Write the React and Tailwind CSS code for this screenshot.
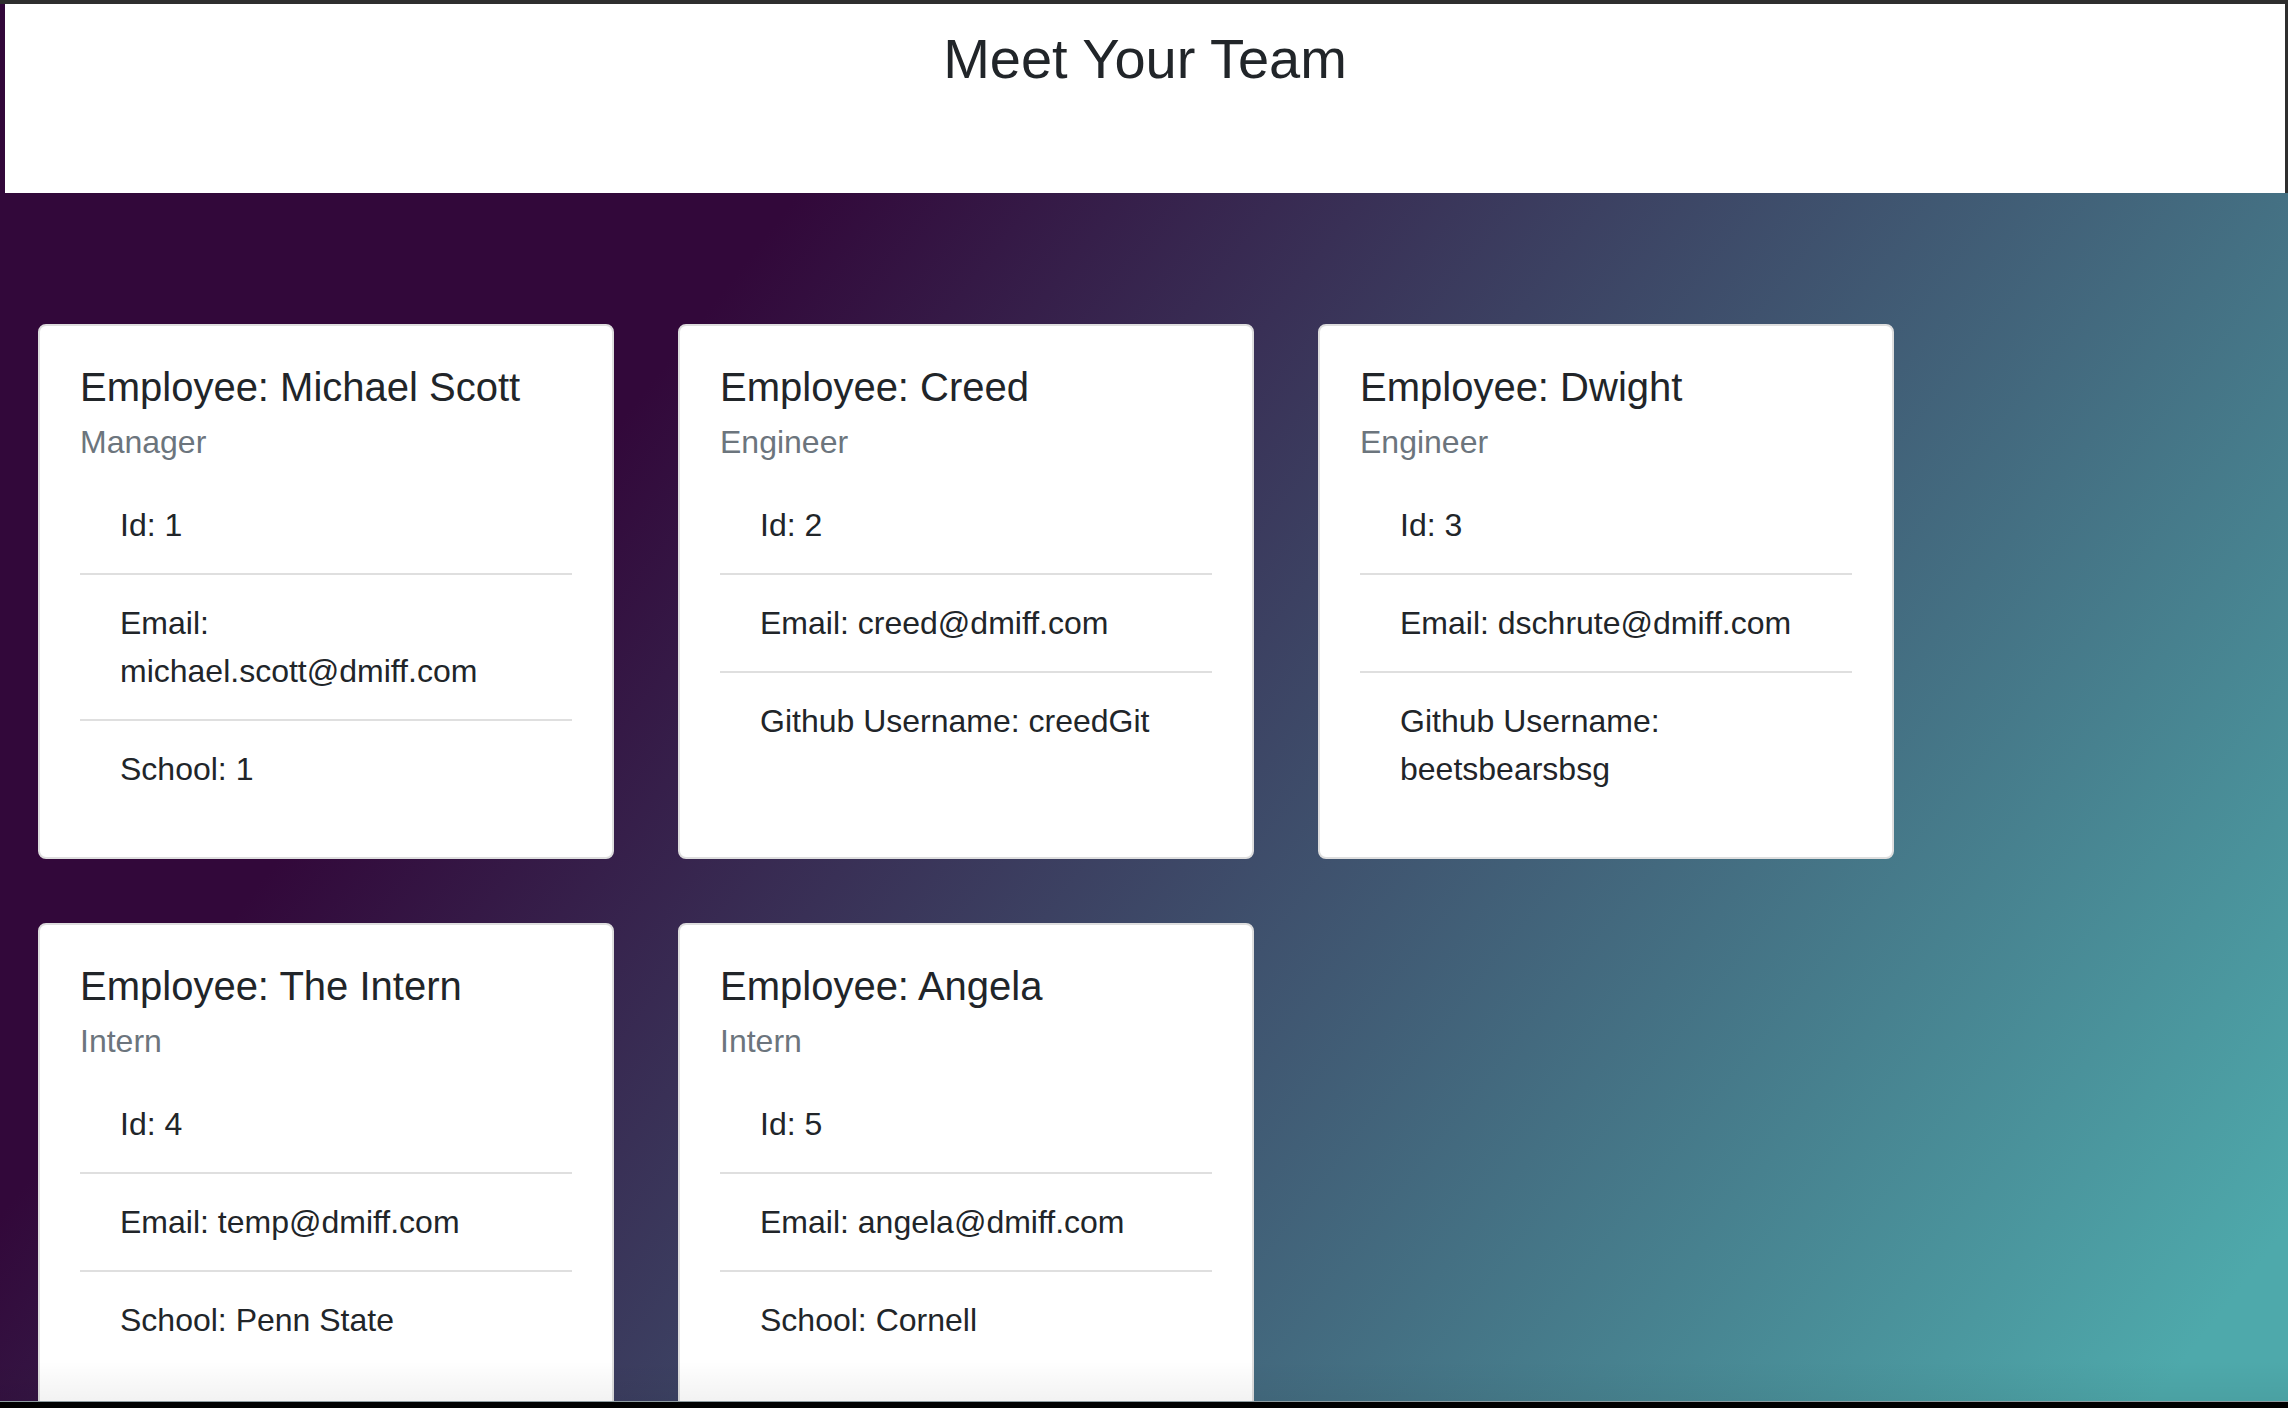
import React from 'react';

const team = [
  { name: 'Michael Scott', role: 'Manager', id: 1, email: 'michael.scott@dmiff.com', extra: 'School: 1' },
  { name: 'Creed', role: 'Engineer', id: 2, email: 'creed@dmiff.com', extra: 'Github Username: creedGit' },
  { name: 'Dwight', role: 'Engineer', id: 3, email: 'dschrute@dmiff.com', extra: 'Github Username: beetsbearsbsg' },
  { name: 'The Intern', role: 'Intern', id: 4, email: 'temp@dmiff.com', extra: 'School: Penn State' },
  { name: 'Angela', role: 'Intern', id: 5, email: 'angela@dmiff.com', extra: 'School: Cornell' },
];

function EmployeeCard({ employee }) {
  const rows = [`Id: ${employee.id}`, `Email: ${employee.email}`, employee.extra];
  return (
    <div className="rounded-[8px] border-2 border-[#dedede] bg-white px-[40px] pt-[37px] pb-[40px]">
      <h5 className="mb-[24px] text-[40px] leading-[48px] font-normal text-[#212529]">
        Employee: {employee.name}
      </h5>
      <h6 className="-mt-[12px] text-[32px] leading-[38px] font-normal text-[#6c757d]">{employee.role}</h6>
      <ul className="mt-[16px]">
        {rows.map((row, i) => (
          <li
            key={i}
            className={`px-[40px] py-[24px] text-[32px] leading-[48px] text-[#212529] ${
              i < rows.length - 1 ? 'border-b-2 border-[#dfdfdf]' : ''
            }`}
          >
            {row}
          </li>
        ))}
      </ul>
    </div>
  );
}

export default function App() {
  return (
    <div className="flex h-[1408px] w-[2288px] flex-col overflow-hidden bg-black font-['Liberation_Sans',Arial,sans-serif]">
      <div className="h-[4px] shrink-0 bg-[#2e2e2e]" />

      <main className="relative h-[1397px] shrink-0 overflow-hidden bg-[linear-gradient(128deg,#32083a_28%,#4ea9ab_96%)]">
        {/* Header */}
        <header className="ml-[5px] h-[189px] border-r-[3px] border-[#2e2e2e] bg-white pt-[21px] text-center">
          <h1 className="text-[56px] leading-[67px] font-normal text-[#212529]">Meet Your Team</h1>
        </header>

        {/* Team cards */}
        <div className="mt-[131px] grid grid-cols-[repeat(3,576px)] gap-[64px] pl-[38px]">
          {team.map((employee) => (
            <EmployeeCard key={employee.id} employee={employee} />
          ))}
        </div>

        <div className="pointer-events-none absolute inset-x-0 bottom-0 h-[40px] bg-linear-to-b from-transparent to-black/5" />
      </main>

      <div className="h-px shrink-0 bg-[#8d9ba0]" />
      <div className="flex-1 bg-black" />
    </div>
  );
}
